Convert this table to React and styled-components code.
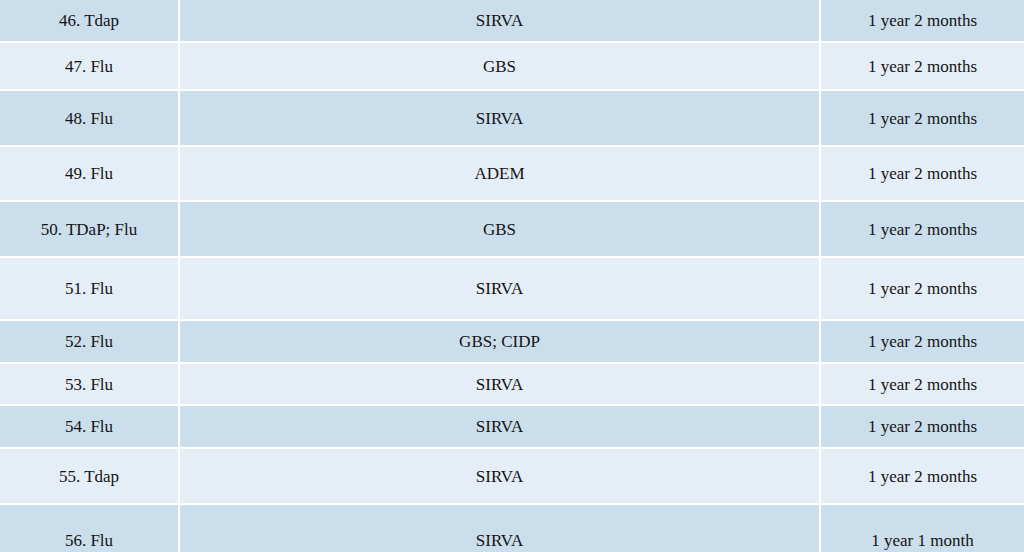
import styled, { createGlobalStyle } from "styled-components";

const GlobalStyle = createGlobalStyle`
    html, body {
        margin: 0;
        padding: 0;
        overflow: hidden;
        background: #fff;
    }
`

const Table = styled.div`
    display: flex;
    flex-direction: column;
    gap: 2px;
    width: 1024px;
    background: #fff;
    font-family: "Liberation Serif", "Times New Roman", serif;
    font-size: 17px;
    color: #141414;
`

const Row = styled.div`
    display: grid;
    grid-template-columns: 178px 1fr 203px;
    gap: 2px;
    height: ${props => props.h}px;
`

const Cell = styled.div`
    display: flex;
    align-items: center;
    justify-content: center;
    padding-top: 1px;
    background: ${props => props.dark ? "#cadeec" : "#e5eef6"};
`

const rows = [
    ["46. Tdap", "SIRVA", "1 year 2 months", 41],
    ["47. Flu", "GBS", "1 year 2 months", 46],
    ["48. Flu", "SIRVA", "1 year 2 months", 54],
    ["49. Flu", "ADEM", "1 year 2 months", 53],
    ["50. TDaP; Flu", "GBS", "1 year 2 months", 54],
    ["51. Flu", "SIRVA", "1 year 2 months", 61],
    ["52. Flu", "GBS; CIDP", "1 year 2 months", 41],
    ["53. Flu", "SIRVA", "1 year 2 months", 40],
    ["54. Flu", "SIRVA", "1 year 2 months", 41],
    ["55. Tdap", "SIRVA", "1 year 2 months", 54],
    ["56. Flu", "SIRVA", "1 year 1 month", 70],
]

const App = () => {
    return <>
        <GlobalStyle />
        <Table>
            {rows.map(([vaccine, injury, time, h], i) => (
                <Row key={vaccine} h={h}>
                    <Cell dark={i % 2 === 0}>{vaccine}</Cell>
                    <Cell dark={i % 2 === 0}>{injury}</Cell>
                    <Cell dark={i % 2 === 0}>{time}</Cell>
                </Row>
            ))}
        </Table>
    </>
}

export default App
